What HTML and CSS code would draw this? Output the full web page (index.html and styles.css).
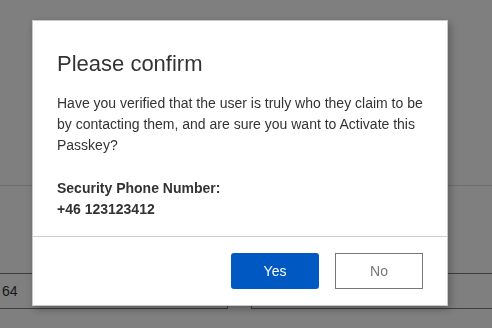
FILE: index.html
```html
<!DOCTYPE html>
<html lang="en">
  <head>
    <meta charset="UTF-8" />
    <meta name="viewport" content="width=device-width, initial-scale=1.0" />
    <title>Please confirm</title>
    <link rel="stylesheet" href="styles.css">
  </head>
  <body>
    <div class="page">
      <div class="separator"></div>
      <div class="form-row">
        <div class="field field-left">64</div>
        <div class="field field-right"></div>
      </div>
    </div>

    <div class="overlay">
      <div class="modal" role="dialog">
        <div class="modal-body">
          <h2 class="modal-title">Please confirm</h2>
          <p class="modal-text">Have you verified that the user is truly who they claim to be by contacting them, and are sure you want to Activate this Passkey?</p>
          <p class="modal-info">
            <b>Security Phone Number:</b><br>
            <b>+46 123123412</b>
          </p>
        </div>
        <div class="modal-footer">
          <button class="btn btn-primary">Yes</button>
          <button class="btn btn-secondary">No</button>
        </div>
      </div>
    </div>
  </body>
</html>
```

FILE: styles.css
```css
*{
  padding: 0;
  margin: 0;
  box-sizing: border-box;
}
body {
  width: 100vw;
  height: 100vh;
  overflow: hidden;
  background-color: #fff;
  font-family: "Liberation Sans", Arial, sans-serif;
  color: #333;
}
.page {
  padding-top: 185px;
}
.separator {
  border-top: 1px solid #dcdcdc;
}
.form-row {
  display: flex;
  gap: 23px;
  margin-top: 87px;
  margin-left: -20px;
}
.field {
  height: 36px;
  border: 1px solid #7a7a7a;
  display: flex;
  align-items: center;
  font-size: 14px;
  color: #333;
}
.field-left {
  width: 248px;
  padding-left: 21px;
}
.field-right {
  flex: 1;
  margin-right: -20px;
}
.overlay {
  position: fixed;
  top: 0;
  left: 0;
  right: 0;
  bottom: 0;
  background-color: rgba(0, 0, 0, 0.5);
}
.modal {
  width: 416px;
  margin: 20px 0 0 32px;
  background-color: #fff;
  border: 1px solid #c8c8c8;
  box-shadow: 2px 3px 8px rgba(0, 0, 0, 0.3);
}
.modal-body {
  padding: 30px 24px 16px;
}
.modal-title {
  font-size: 22px;
  font-weight: normal;
  line-height: 25px;
  color: #333;
}
.modal-text {
  margin-top: 17px;
  font-size: 14px;
  line-height: 21px;
}
.modal-info {
  margin-top: 22px;
  font-size: 14px;
  line-height: 21px;
}
.modal-footer {
  display: flex;
  justify-content: flex-end;
  gap: 16px;
  padding: 16px 24px 16px;
  border-top: 1px solid #cccccc;
}
.btn {
  width: 88px;
  height: 36px;
  font-family: inherit;
  font-size: 14px;
  cursor: pointer;
}
.btn-primary {
  background-color: #0058c2;
  color: #fff;
  border: none;
  border-radius: 3px;
}
.btn-secondary {
  background-color: #fff;
  color: #777;
  border: 1px solid #777;
}
```
